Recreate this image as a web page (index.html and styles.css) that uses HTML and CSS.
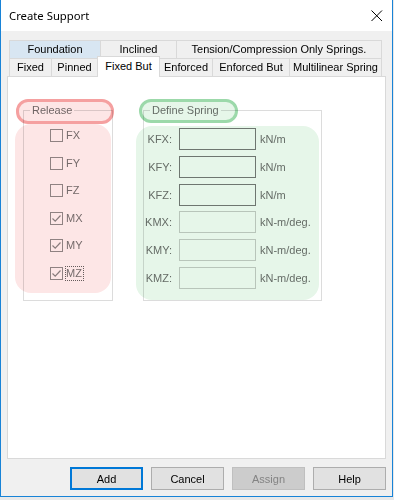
FILE: index.html
```html
<!DOCTYPE html>
<html lang="en">
<head>
    <meta charset="UTF-8">
    <title>Create Support</title>
    <link rel="stylesheet" href="styles.css">
</head>
<body>
    <div class="window">
        <!-- Title bar -->
        <div class="titlebar">
            <span class="title">Create Support</span>
            <svg class="close" width="12" height="12" viewBox="0 0 12 12">
                <path d="M0.5 0.5 L11 11 M11 0.5 L0.5 11" stroke="#000" stroke-width="1" fill="none"/>
            </svg>
        </div>

        <div class="content">
            <!-- Tabs -->
            <div class="tabs">
                <div class="tab-row">
                    <div class="tab tab-hover w-foundation">Foundation</div>
                    <div class="tab w-inclined">Inclined</div>
                    <div class="tab w-tension">Tension/Compression Only Springs.</div>
                </div>
                <div class="tab-row">
                    <div class="tab w-fixed">Fixed</div>
                    <div class="tab w-pinned">Pinned</div>
                    <div class="tab tab-active w-fixedbut">Fixed But</div>
                    <div class="tab w-enforced">Enforced</div>
                    <div class="tab w-enforcedbut">Enforced But</div>
                    <div class="tab w-multi">Multilinear Spring</div>
                </div>
            </div>

            <!-- Tab page -->
            <div class="panel">
                <fieldset class="group group-release">
                    <legend>Release</legend>
                    <div class="checks">
                        <label class="check"><span class="box"></span><span class="lbl">FX</span></label>
                        <label class="check"><span class="box"></span><span class="lbl">FY</span></label>
                        <label class="check"><span class="box"></span><span class="lbl">FZ</span></label>
                        <label class="check"><span class="box checked"><svg width="11" height="11" viewBox="0 0 11 11"><path d="M1.5 5.5 L4.2 8.2 L9.5 2.5" stroke="#8a8a8a" stroke-width="1.2" fill="none"/></svg></span><span class="lbl">MX</span></label>
                        <label class="check"><span class="box checked"><svg width="11" height="11" viewBox="0 0 11 11"><path d="M1.5 5.5 L4.2 8.2 L9.5 2.5" stroke="#8a8a8a" stroke-width="1.2" fill="none"/></svg></span><span class="lbl">MY</span></label>
                        <label class="check"><span class="box checked"><svg width="11" height="11" viewBox="0 0 11 11"><path d="M1.5 5.5 L4.2 8.2 L9.5 2.5" stroke="#8a8a8a" stroke-width="1.2" fill="none"/></svg></span><span class="lbl focus">MZ</span></label>
                    </div>
                </fieldset>

                <fieldset class="group group-spring">
                    <legend>Define Spring</legend>
                    <div class="springs">
                        <span class="sp-label">KFX:</span><span class="textbox"></span><span class="unit">kN/m</span>
                        <span class="sp-label">KFY:</span><span class="textbox"></span><span class="unit">kN/m</span>
                        <span class="sp-label">KFZ:</span><span class="textbox"></span><span class="unit">kN/m</span>
                        <span class="sp-label">KMX:</span><span class="textbox disabled"></span><span class="unit">kN-m/deg.</span>
                        <span class="sp-label">KMY:</span><span class="textbox disabled"></span><span class="unit">kN-m/deg.</span>
                        <span class="sp-label">KMZ:</span><span class="textbox disabled"></span><span class="unit">kN-m/deg.</span>
                    </div>
                </fieldset>

                <!-- Highlight annotations drawn over the page -->
                <div class="mark mark-pink pill-release"></div>
                <div class="mark mark-pink area-release"></div>
                <div class="mark mark-green pill-spring"></div>
                <div class="mark mark-green area-spring"></div>
            </div>

            <!-- Buttons -->
            <div class="buttons">
                <button class="btn btn-default">Add</button>
                <button class="btn">Cancel</button>
                <button class="btn" disabled>Assign</button>
                <button class="btn">Help</button>
            </div>
        </div>
    </div>
</body>
</html>
```

FILE: styles.css
```css
/* Basic reset */
* {
    margin: 0;
    padding: 0;
    box-sizing: border-box;
}

html {
    background: #e9e9e9;
}

body {
    font-family: "Liberation Sans", Arial, sans-serif;
    font-size: 11px;
    color: #000;
}

/* Dialog window */
.window {
    width: 393px;
    height: 497px;
    border: 1px solid #1883d7;
    border-top: none;
    background: #f0f0f0;
    display: flex;
    flex-direction: column;
}

.titlebar {
    height: 31px;
    background: #fff;
    display: flex;
    align-items: center;
    justify-content: space-between;
    padding: 0 9px 0 8px;
}

.title {
    font-family: "Segoe UI", "Noto Sans", sans-serif;
    font-size: 11.3px;
    color: #000;
}

.close {
    display: block;
}

.content {
    flex: 1;
    display: flex;
    flex-direction: column;
    padding: 9px 6px 0 6px;
}

/* Tabs */
.tabs {
    margin: 0 2px;
}

.tab-row {
    display: flex;
    height: 18px;
}

.tab {
    height: 18px;
    line-height: 17px;
    text-align: center;
    white-space: nowrap;
    border: 1px solid #d9d9d9;
    border-left: none;
    border-bottom: none;
    background: #f0f0f0;
}

.tab:first-child {
    border-left: 1px solid #d9d9d9;
}

.tab-hover {
    background: #d8e6f2;
}

.tab-active {
    position: relative;
    z-index: 2;
    height: 21px;
    margin-top: -2px;
    margin-bottom: -1px;
    line-height: 18px;
    background: #fff;
    border-left: 1px solid #d9d9d9;
    margin-left: -1px;
}

.w-foundation { width: 92px; }
.w-inclined { width: 76px; }
.w-tension { width: 205px; }
.w-fixed { width: 43px; }
.w-pinned { width: 46px; }
.w-fixedbut { width: 63px; }
.w-enforced { width: 53px; }
.w-enforcedbut { width: 77px; }
.w-multi { width: 92px; }

/* Tab page */
.panel {
    position: relative;
    height: 383px;
    background: #fff;
    border: 1px solid #d9d9d9;
    display: flex;
    align-items: flex-start;
    padding: 27px 0 0 15px;
}

.group {
    border: 1px solid #dcdcdc;
    height: 197px;
    padding: 0;
}

.group legend {
    margin-left: 6px;
    padding: 0 2px;
    line-height: 13px;
    color: #707070;
}

.group-release {
    width: 90px;
}

.group-spring {
    width: 179px;
    margin-left: 30px;
}

/* Release check boxes */
.checks {
    display: flex;
    flex-direction: column;
    gap: 14.6px;
    padding: 12px 0 0 26px;
}

.check {
    display: flex;
    align-items: center;
    height: 13px;
    color: #767676;
}

.box {
    width: 13px;
    height: 13px;
    border: 1px solid #909090;
    background: #fff;
    display: flex;
    align-items: center;
    justify-content: center;
    margin-right: 3px;
}

.box svg {
    display: block;
}

.lbl {
    line-height: 13px;
    padding: 0 1px 0 0;
}

.focus {
    outline: 1px dotted #666;
    outline-offset: 0;
}

/* Spring values */
.springs {
    display: grid;
    grid-template-columns: 29px 77px auto;
    column-gap: 6px;
    row-gap: 5.8px;
    align-items: center;
    padding-top: 11px;
}

.sp-label {
    text-align: right;
    padding-right: 1px;
    color: #707070;
}

.textbox {
    height: 22px;
    border: 1px solid #7a7a7a;
    background: #fff;
}

.textbox.disabled {
    border-color: #cccccc;
}

.unit {
    margin-left: -2px;
    color: #707070;
}

/* Highlight marks */
.mark {
    position: absolute;
    pointer-events: none;
    mix-blend-mode: multiply;
}

.mark-pink {
    background: #fde6e6;
}

.mark-green {
    background: #e6f6e9;
}

.pill-release {
    left: 8px;
    top: 22px;
    width: 98px;
    height: 25px;
    border: 3px solid #f5a0a0;
    border-radius: 12px;
}

.area-release {
    left: 7px;
    top: 47px;
    width: 96px;
    height: 169px;
    border-radius: 16px;
}

.pill-spring {
    left: 131px;
    top: 22px;
    width: 99px;
    height: 24px;
    border: 3px solid #9cd9aa;
    border-radius: 12px;
}

.area-spring {
    left: 128px;
    top: 49px;
    width: 183px;
    height: 174px;
    border-radius: 16px;
}

/* Buttons */
.buttons {
    display: flex;
    justify-content: flex-end;
    gap: 8px;
    margin-top: 8px;
}

.btn {
    width: 73px;
    height: 23px;
    font-family: "Liberation Sans", Arial, sans-serif;
    font-size: 11px;
    color: #000;
    background: #e1e1e1;
    border: 1px solid #adadad;
}

.btn-default {
    border: 2px solid #0078d7;
}

.btn:disabled {
    background: #cccccc;
    border-color: #bfbfbf;
    color: #838383;
}
```
